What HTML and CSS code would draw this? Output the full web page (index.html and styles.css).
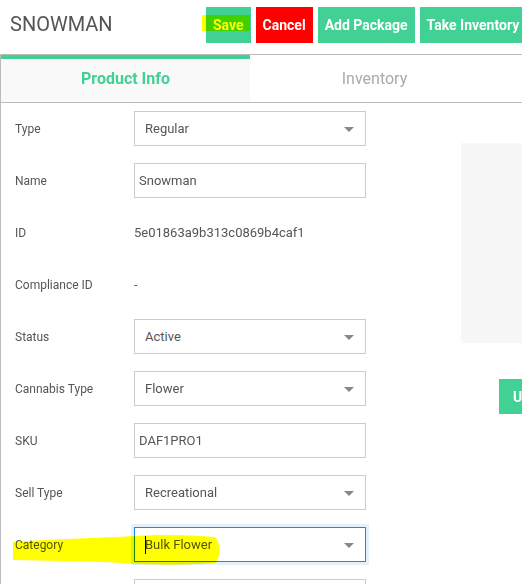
FILE: index.html
```html
<!DOCTYPE html>
<html>
<head>
<meta charset="utf-8">
<link rel="stylesheet" href="styles.css">
</head>
<body>
<div class="page">
  <header class="header">
    <div class="title">SNOWMAN</div>
    <div class="actions">
      <button class="btn green">Save</button>
      <button class="btn red">Cancel</button>
      <button class="btn green">Add Package</button>
      <button class="btn green">Take Inventory Snapshot</button>
    </div>
    <span class="hl hl-save"></span>
  </header>
  <main class="panel">
    <nav class="tabs">
      <div class="tab active">Product Info</div>
      <div class="tab">Inventory</div>
    </nav>
    <div class="content">
      <form class="form">
        <div class="row"><label>Type</label><div class="field select">Regular<i class="arrow"></i></div></div>
        <div class="row"><label>Name</label><div class="field input">Snowman</div></div>
        <div class="row"><label>ID</label><div class="value">5e01863a9b313c0869b4caf1</div></div>
        <div class="row"><label>Compliance ID</label><div class="value">-</div></div>
        <div class="row"><label>Status</label><div class="field select">Active<i class="arrow"></i></div></div>
        <div class="row"><label>Cannabis Type</label><div class="field select">Flower<i class="arrow"></i></div></div>
        <div class="row"><label>SKU</label><div class="field input">DAF1PRO1</div></div>
        <div class="row"><label>Sell Type</label><div class="field select">Recreational<i class="arrow"></i></div></div>
        <div class="row"><label>Category</label><div class="field select focus"><span class="caret"></span>Bulk Flower<i class="arrow"></i></div></div>
        <div class="row"><label></label><div class="field select"></div></div>
        <svg class="hl hl-cat" width="230" height="40" viewBox="0 0 230 40"><path d="M12,9 C50,6 100,5 135,3 C160,1 190,2 214,4 C220,9 220,25 214,30 C190,32 160,32 135,31 C100,28 60,28 12,27 Z" fill="#ffff00"/></svg>
      </form>
      <aside class="side">
        <div class="imagebox"></div>
        <button class="btn green upload">Upload</button>
      </aside>
    </div>
  </main>
</div>
</body>
</html>
```
FILE: styles.css
```css
* { box-sizing: border-box; }
html, body { margin: 0; padding: 0; }
body {
  width: 522px;
  height: 584px;
  overflow: hidden;
  background: #fff;
  font-family: Roboto, "Liberation Sans", sans-serif;
  color: #555;
}
.page { width: 522px; position: relative; }
.header {
  position: relative;
  height: 54px;
  display: flex;
  align-items: flex-start;
  white-space: nowrap;
}
.title {
  flex: 0 0 206px;
  padding: 12px 0 0 10px;
  font-size: 20px;
  line-height: 24px;
  color: #555;
}
.actions {
  display: flex;
  gap: 5px;
  padding-top: 7px;
}
.btn {
  height: 36px;
  border: 0;
  padding: 0 7px;
  font-family: Roboto, "Liberation Sans", sans-serif;
  font-weight: bold;
  font-size: 14px;
  color: #fff;
  white-space: nowrap;
  flex: 0 0 auto;
}
.green { background: #41d195; }
.red { background: #ff0000; }
.hl { position: absolute; mix-blend-mode: multiply; pointer-events: none; }
.hl-save {
  left: 202px; top: 15px; width: 48px; height: 16px;
  background: #ffff00;
}
.panel {
  border-top: 1px solid #bbb;
  border-left: 1px solid #bbb;
  width: 522px;
}
.tabs {
  display: flex;
  border-bottom: 1px solid #bbb;
  height: 48px;
}
.tab {
  width: 249px;
  border-top: 4px solid transparent;
  padding-bottom: 4px;
  display: flex;
  align-items: center;
  justify-content: center;
  font-size: 16px;
  color: #aaa;
  font-weight: normal;
}
.tab.active {
  border-top-color: #41d195;
  background: #f9f9f9;
  color: #41d195;
  font-weight: bold;
}
.content {
  display: flex;
  align-items: flex-start;
}
.form {
  position: relative;
  flex: 0 0 365px;
  padding: 8px 0 0 14px;
  display: flex;
  flex-direction: column;
  gap: 17px;
}
.row {
  display: flex;
  align-items: center;
  height: 35px;
}
.row label {
  flex: 0 0 119px;
  font-size: 12px;
  color: #555;
}
.value { font-size: 13px; color: #555; }
.field {
  position: relative;
  width: 232px;
  height: 35px;
  border: 1px solid #ccc;
  background: #fff;
  display: flex;
  align-items: center;
  font-size: 13px;
  color: #555;
}
.input { padding-left: 4px; }
.select { padding-left: 10px; }
.focus {
  border-color: #1f84ee;
  box-shadow: 0 0 0 3px #e4f0fc;
}
.caret {
  position: absolute;
  left: 10px;
  top: 8px;
  width: 1px;
  height: 18px;
  background: #000;
}
.arrow {
  position: absolute;
  right: 11px;
  top: 15px;
  width: 0; height: 0;
  border-left: 5px solid transparent;
  border-right: 5px solid transparent;
  border-top: 5px solid #888;
}
.hl-cat { left: 0; top: 430px; }
.side {
  margin-left: 95px;
  padding-top: 40px;
  display: flex;
  flex-direction: column;
  flex: 0 0 auto;
}
.imagebox {
  width: 200px;
  height: 200px;
  background: #f7f7f7;
}
.upload {
  margin: 36px 0 0 38px;
  height: 35px;
  align-self: flex-start;
  padding: 0 14px;
}
```
